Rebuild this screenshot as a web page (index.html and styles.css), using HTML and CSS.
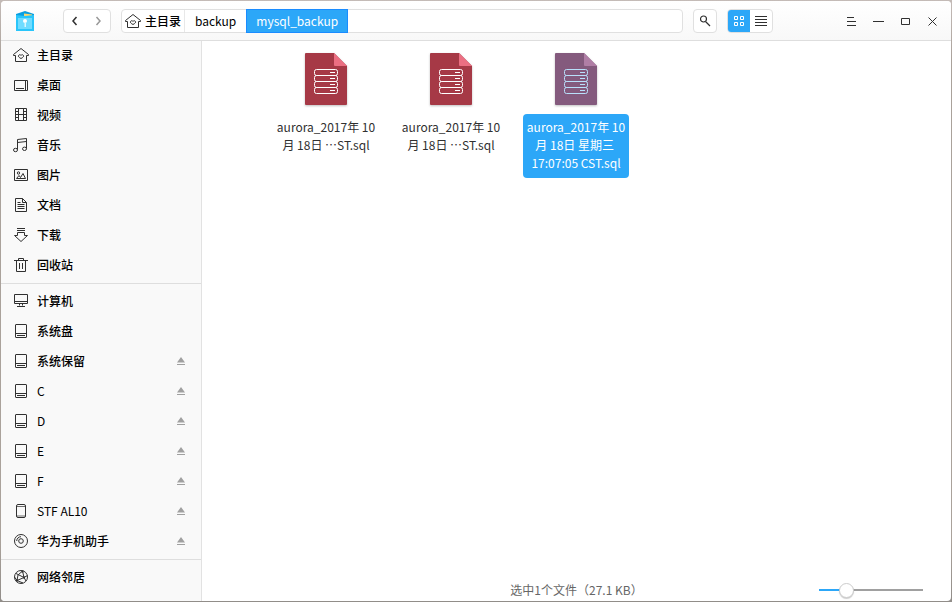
FILE: index.html
```
<!DOCTYPE html>
<html lang="zh-CN">
<head>
<meta charset="utf-8">
<title>mysql_backup</title>
<link rel="stylesheet" href="styles.css">
</head>
<body>
<svg class="sprite" aria-hidden="true">
  <symbol id="home" viewBox="0 0 18 18"><path d="M1.500 9.500V8.500L9 2.500l7.500 6v1h-2v6h-11v-6z"/><path d="M9 12.500C7 11.500 6 10.500 6.500 9.500c.5-1 1.800-1 2.500 0 .7-1 2-1 2.500 0 .5 1-.5 2-2.500 3z"/></symbol>
  <symbol id="desktop" viewBox="0 0 18 18"><path d="M2.500 4.500h13v10h-13zM13.500 4.500v10M4 12.500h8"/></symbol>
  <symbol id="video" viewBox="0 0 18 18"><path d="M3.500 2.500h11v12h-11zM6.500 2.500v12M11.500 2.500v12M6.500 8.500h5M3.500 5.500h3M3.500 8.500h3M3.500 11.500h3M11.500 5.500h3M11.500 8.500h3M11.500 11.500h3"/></symbol>
  <symbol id="music" viewBox="0 0 18 18"><path d="M5.500 13.500v-10l9-1v10M5.500 6.500l9-1"/><ellipse cx="3.500" cy="14" rx="2" ry="1.700"/><ellipse cx="12.500" cy="12.800" rx="2" ry="1.700"/></symbol>
  <symbol id="picture" viewBox="0 0 18 18"><path d="M2.500 3.500h13v11h-13z"/><circle cx="6.500" cy="7" r="1.200"/><path d="M4.500 12.500L7 9.500l1.500 2 2.500-4 2.500 5z"/></symbol>
  <symbol id="document" viewBox="0 0 18 18"><path d="M3.500 2.500h7l4 4v9h-11zM10.500 2.500v4h4M5.500 6.500h3M5.500 8.500h7M5.500 10.500h7M5.500 12.500h7"/></symbol>
  <symbol id="download" viewBox="0 0 18 18"><path d="M5 2.500h8M5 4.500h8M5.500 6.500h7v3h3L9 15.500 2.500 9.500h3z"/></symbol>
  <symbol id="trash" viewBox="0 0 18 18"><path d="M2 4.500h14M6.500 4.500v-2h5v2M4.500 4.500v11h9v-11M7.500 7v6M10.500 7v6"/></symbol>
  <symbol id="computer" viewBox="0 0 18 18"><path d="M2.500 2.500h13v9h-13zM2.500 9.500h13M7.500 11.500v2M10.500 11.500v2M5 14.500h8"/></symbol>
  <symbol id="disk" viewBox="0 0 18 18"><rect x="3.500" y="2.500" width="11" height="13" rx=".5"/><path d="M3.500 11.500h11M5 13.500h8"/></symbol>
  <symbol id="phone" viewBox="0 0 18 18"><rect x="4.500" y="2.500" width="9" height="13" rx="1.500"/><path d="M4.500 4.500h9M4.500 14h9" stroke-width=".7"/></symbol>
  <symbol id="disc" viewBox="0 0 18 18"><circle cx="9" cy="9" r="6.500"/><circle cx="9" cy="9" r="2.300"/><path d="M4.700 9A4.300 4.300 0 0 1 9 4.700" /></symbol>
  <symbol id="network" viewBox="0 0 18 18"><circle cx="9" cy="9" r="6.500"/><path d="M10.500 3L12 9.500 5 12.500M4 5.500l8 4 2 3.500M10.500 3L6 7l-1 5.500M2.500 9L5 12.500l6 2.500M12 9.500l3.500-2"/><path class="dot" d="M9.500 2.500h2v2h-2zM11 8.500h2v2h-2zM4 11.500h2v2H4z"/></symbol>
  <symbol id="eject" viewBox="0 0 8 8"><path d="M4 0l4 5.500H0zM0 7h8v1H0z"/></symbol>
  <symbol id="sqlfile" viewBox="0 0 42 52"><path class="sheet" d="M1 0h28l13 13v38q0 1-1 1H1q-1 0-1-1V1q0-1 1-1z"/><path class="fold" d="M29 0l13 13H30q-1 0-1-1z"/><g class="rack"><rect x="9.500" y="16.500" width="23" height="6" rx="2"/><rect x="9.500" y="22.500" width="23" height="6" rx="2"/><rect x="9.500" y="28.500" width="23" height="6" rx="2"/><rect x="9.500" y="34.500" width="23" height="6" rx="2"/><path d="M25 19.500h5M25 25.500h5M25 31.500h5M25 37.500h5"/></g></symbol>
</svg>

<div class="window">
  <header class="titlebar">
    <svg class="logo" viewBox="0 0 18 20" aria-hidden="true"><path d="M0 3L9 0l9 3v5H0z" fill="#0a9fe0"/><path d="M8 2.500l8 1v2H8z" fill="#ffd66b"/><path d="M0 4l9 1 9-1v16H0z" fill="#29c5fa"/><path d="M2 7h14v11H2z" fill="#70dcff"/><circle cx="9" cy="10" r="2" fill="#fff"/><path d="M8.500 11h1.500v5H8.500z" fill="#d8f7ff"/></svg>
    <div class="history">
      <button type="button" aria-label="后退"><svg viewBox="0 0 10 10"><path d="M5.500 1L2 5l3.500 4"/></svg></button>
      <button type="button" aria-label="前进" class="dim"><svg viewBox="0 0 10 10"><path d="M2.500 1L6 5 2.500 9"/></svg></button>
    </div>
    <nav class="crumbs" aria-label="路径">
      <a href="#" class="crumb root"><svg class="icon"><use href="#home"/></svg>主目录</a>
      <a href="#" class="crumb">backup</a>
      <a href="#" class="crumb current">mysql_backup</a>
    </nav>
    <button type="button" class="search" aria-label="搜索"><svg viewBox="0 0 12 12"><circle cx="4.500" cy="4" r="3"/><path d="M6.500 6.500L11 11"/></svg></button>
    <div class="views">
      <button type="button" class="on" aria-label="图标视图"><svg viewBox="0 0 12 12"><path d="M1.500 1.500h3v3h-3zM7.500 1.500h3v3h-3zM1.500 7.500h3v3h-3zM7.500 7.500h3v3h-3z"/></svg></button>
      <button type="button" aria-label="列表视图"><svg viewBox="0 0 12 12"><path d="M0 1.500h12M0 4.500h12M0 7.500h12M0 10.500h12"/></svg></button>
    </div>
    <div class="controls">
      <button type="button" aria-label="菜单"><svg viewBox="0 0 11 11"><path d="M1 1.500h7M1 5.500h9M1 9.500h9"/></svg></button>
      <button type="button" aria-label="最小化"><svg viewBox="0 0 11 11"><path d="M0 5.500h11"/></svg></button>
      <button type="button" aria-label="最大化"><svg viewBox="0 0 11 11"><path d="M1.500 2.500h8v6h-8z"/></svg></button>
      <button type="button" aria-label="关闭"><svg viewBox="0 0 11 11"><path d="M1.500 1.500l8 8M9.500 1.500l-8 8"/></svg></button>
    </div>
  </header>

  <div class="body">
    <nav class="sidebar" aria-label="位置">
      <ul>
        <li><a href="#"><svg class="icon"><use href="#home"/></svg>主目录</a></li>
        <li><a href="#"><svg class="icon"><use href="#desktop"/></svg>桌面</a></li>
        <li><a href="#"><svg class="icon"><use href="#video"/></svg>视频</a></li>
        <li><a href="#"><svg class="icon"><use href="#music"/></svg>音乐</a></li>
        <li><a href="#"><svg class="icon"><use href="#picture"/></svg>图片</a></li>
        <li><a href="#"><svg class="icon"><use href="#document"/></svg>文档</a></li>
        <li><a href="#"><svg class="icon"><use href="#download"/></svg>下载</a></li>
        <li><a href="#"><svg class="icon"><use href="#trash"/></svg>回收站</a></li>
      </ul>
      <ul>
        <li><a href="#"><svg class="icon"><use href="#computer"/></svg>计算机</a></li>
        <li><a href="#"><svg class="icon"><use href="#disk"/></svg>系统盘</a></li>
        <li><a href="#"><svg class="icon"><use href="#disk"/></svg>系统保留</a><button type="button" aria-label="弹出"><svg><use href="#eject"/></svg></button></li>
        <li class="latin"><a href="#"><svg class="icon"><use href="#disk"/></svg>C</a><button type="button" aria-label="弹出"><svg><use href="#eject"/></svg></button></li>
        <li class="latin"><a href="#"><svg class="icon"><use href="#disk"/></svg>D</a><button type="button" aria-label="弹出"><svg><use href="#eject"/></svg></button></li>
        <li class="latin"><a href="#"><svg class="icon"><use href="#disk"/></svg>E</a><button type="button" aria-label="弹出"><svg><use href="#eject"/></svg></button></li>
        <li class="latin"><a href="#"><svg class="icon"><use href="#disk"/></svg>F</a><button type="button" aria-label="弹出"><svg><use href="#eject"/></svg></button></li>
        <li class="latin"><a href="#"><svg class="icon"><use href="#phone"/></svg>STF AL10</a><button type="button" aria-label="弹出"><svg><use href="#eject"/></svg></button></li>
        <li><a href="#"><svg class="icon"><use href="#disc"/></svg>华为手机助手</a><button type="button" aria-label="弹出"><svg><use href="#eject"/></svg></button></li>
      </ul>
      <ul>
        <li><a href="#"><svg class="icon"><use href="#network"/></svg>网络邻居</a></li>
      </ul>
    </nav>

    <main class="content">
      <div class="files">
        <a href="#" class="file"><svg><use href="#sqlfile"/></svg><span>aurora_2017年 10<br>月 18日 ⋯ST.sql</span></a>
        <a href="#" class="file"><svg><use href="#sqlfile"/></svg><span>aurora_2017年 10<br>月 18日 ⋯ST.sql</span></a>
        <a href="#" class="file selected"><svg><use href="#sqlfile"/></svg><span>aurora_2017年 10<br>月 18日 星期三&nbsp;<br>17:07:05 CST.sql</span></a>
      </div>
      <footer class="status">
        <output>选中1个文件（27.1 KB）</output>
        <input type="range" min="0" max="100" value="22" aria-label="图标大小">
      </footer>
    </main>
  </div>
</div>
</body>
</html>
```
FILE: styles.css
```
* {
  box-sizing: border-box;
}

body {
  margin: 0;
  padding: 1px;
  height: 100vh;
  overflow: hidden;
  background: linear-gradient(#c4bbb7, #aaa29b 10%, #aaa29b 90%, #918d89);
  font: 12px/18px "Noto Sans CJK SC", sans-serif;
  color: #000;
}

a {
  color: inherit;
  text-decoration: none;
}

button {
  display: flex;
  align-items: center;
  justify-content: center;
  padding: 0;
  border: 0;
  background: none;
  color: #303030;
}

svg {
  flex: none;
  fill: none;
  stroke: currentColor;
}

.sprite {
  position: absolute;
  width: 0;
  height: 0;
}

.icon {
  width: 18px;
  height: 18px;
  color: #303030;
}

.dot {
  fill: #303030;
  stroke: none;
}

.window {
  display: flex;
  flex-direction: column;
  height: 100%;
  overflow: hidden;
  border-radius: 4px;
  background: #fff;
}

/* Title bar */

.titlebar {
  position: relative;
  display: flex;
  align-items: center;
  height: 39px;
  padding: 0 5px 0 15px;
  background: linear-gradient(#fff, #f8f8f8);
  box-shadow: 0 1px #dedede;
}

.logo {
  width: 18px;
  height: 20px;
  margin-right: 29px;
  stroke: none;
}

.history,
.crumbs,
.search,
.views {
  display: flex;
  height: 24px;
  border: 1px solid #e0e0e0;
  border-radius: 4px;
  background: #fff;
}

.history {
  width: 48px;
  margin-right: 10px;
}

.history button {
  flex: 1;
}

.history svg {
  width: 10px;
  height: 10px;
  stroke-width: 1.5;
}

.history .dim {
  color: #999;
}

.crumbs {
  flex: 1;
  margin-right: 10px;
}

.crumb {
  display: flex;
  align-items: center;
  margin: -1px 0;
  padding: 0 10px;
}

.crumb.root {
  gap: 3px;
  margin: 0;
  padding: 0 3px 0 2px;
  border-right: 1px solid #e8e8e8;
  font-weight: 500;
}

.crumb.current {
  padding: 0 9px;
  border: 1px solid #1a8cff;
  background: #2ca7f8;
  color: #fff;
}

.search {
  width: 24px;
  margin-right: 10px;
}

.search svg {
  width: 12px;
  height: 12px;
  stroke-width: 1.2;
}

.views {
  width: 46px;
  overflow: hidden;
}

.views button {
  flex: 1;
}

.views svg {
  width: 12px;
  height: 12px;
}

.views .on {
  background: #2ca7f8;
  color: #fff;
}

.controls {
  display: flex;
  margin-left: 65px;
  padding-top: 2px;
}

.controls button {
  width: 27px;
  height: 27px;
}

.controls svg {
  width: 11px;
  height: 11px;
}

/* Places */

.body {
  display: flex;
  flex: 1;
  min-height: 0;
}

.sidebar {
  width: 201px;
  border-right: 1px solid #e2e2e2;
  background: #f9f9f9;
  font-weight: 500;
}

.sidebar ul {
  margin: 0;
  padding: 0 0 3px;
  list-style: none;
}

.sidebar ul + ul {
  padding-top: 2px;
  border-top: 1px solid #dedede;
}

.sidebar li {
  display: flex;
  align-items: center;
  height: 30px;
  padding: 0 16px 0 11px;
}

.sidebar .latin {
  font-weight: 400;
}

.sidebar a {
  display: flex;
  flex: 1;
  align-items: center;
  gap: 7px;
}

.sidebar button svg {
  width: 8px;
  height: 8px;
  fill: #a0a0a0;
  stroke: none;
}

/* Files */

.content {
  display: flex;
  flex: 1;
  flex-direction: column;
  min-width: 0;
}

.files {
  display: grid;
  flex: 1;
  grid-template-columns: repeat(auto-fill, 125px);
  align-content: start;
  justify-content: center;
  padding: 13px 1px 0 0;
}

.file {
  display: flex;
  flex-direction: column;
  align-items: center;
  gap: 9px;
  color: #303030;
  text-align: center;
}

.file svg {
  width: 42px;
  height: 52px;
  overflow: visible;
  filter: drop-shadow(0 1px 1px rgba(0, 0, 0, 0.25));
  --sheet: #a63946;
  --fold: #eb6f82;
  --rack: #fff;
}

.sheet {
  fill: var(--sheet);
  stroke: none;
}

.fold {
  fill: var(--fold);
  stroke: none;
}

.rack {
  stroke: var(--rack);
}

.file span {
  padding: 4px 4px 6px;
  border-radius: 4px;
}

.file.selected svg {
  --sheet: #845a7d;
  --fold: #b07ea5;
  --rack: #b9e0fb;
}

.file.selected span {
  background: #2ca7f8;
  color: #fff;
}

/* Status bar */

.status {
  display: grid;
  grid-template-columns: 1fr auto 1fr;
  align-items: center;
  height: 22px;
  padding: 0 28px;
  color: #666;
}

.status output {
  grid-column: 2;
}

.status input {
  justify-self: end;
  width: 104px;
  height: 16px;
  margin: 0;
  appearance: none;
  background: linear-gradient(to right, #2ca7f8 27%, #a0a0a0 27%) center / 100% 2px no-repeat;
}

.status input::-webkit-slider-thumb {
  width: 15px;
  height: 15px;
  appearance: none;
  border: 1px solid #ccc;
  border-radius: 50%;
  background: #fff;
  box-shadow: 0 1px 1px rgba(0, 0, 0, 0.2);
}
```
